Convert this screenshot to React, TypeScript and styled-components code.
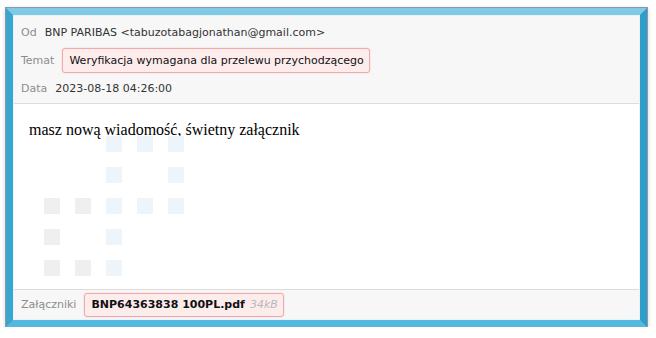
import styled, { createGlobalStyle } from "styled-components";

const GlobalStyle = createGlobalStyle`
  html, body {
    margin: 0;
    padding: 0;
    background: #ffffff;
  }
`;

const Janela = styled.div`
  box-sizing: border-box;
  margin: 8px 0 0 6px;
  width: 641px;
  height: 319px;
  border: 7px solid #52b6dc;
  border-top-color: #80cae6;
  border-left-color: #3aa6d0;
  border-right-color: #2f9dc8;
  border-bottom-color: #55b8de;
  box-shadow: 0 0 0 1px #8a9aa3, 0 1px 5px rgba(0, 0, 0, 0.25),
    inset 0 0 0 1px #e6f3f8;
  display: flex;
  flex-direction: column;
  background: #ffffff;
  font-family: "DejaVu Sans", Verdana, sans-serif;
  font-size: 11px;
`;

const Cabecalho = styled.div`
  background: #f7f7f7;
  border-bottom: 1px solid #dcdcdc;
  padding: 2px 7px 1px;
  margin: 1px 1px 0;
`;

const Linha = styled.div`
  display: flex;
  align-items: center;
  height: 28px;
`;

const Rotulo = styled.span`
  color: #8c8c8c;
  margin-right: 8px;
`;

const Valor = styled.span`
  color: #333333;
`;

const Destaque = styled.span<{ $negrito?: boolean }>`
  display: inline-flex;
  align-items: center;
  box-sizing: border-box;
  height: ${(p) => (p.$negrito ? "24px" : "25px")};
  padding: 0 5px 0 6px;
  background: #fdecec;
  border: 1px solid #f1aaaa;
  border-radius: 3px;
  box-shadow: 0 0 2px rgba(240, 120, 120, 0.35);
  color: #111111;
  font-weight: ${(p) => (p.$negrito ? 700 : 400)};
`;

const Tamanho = styled.span`
  color: #b8b8b8;
  font-style: italic;
  font-weight: 400;
  margin-left: 5px;
`;

const Corpo = styled.div`
  flex: 1;
  padding: 17px 16px 0;
  overflow: hidden;
`;

const Mensagem = styled.div`
  font-family: "Liberation Serif", "Times New Roman", serif;
  font-size: 16px;
  color: #000000;
  line-height: 18px;
`;

const Grade = styled.div`
  display: grid;
  grid-template-columns: repeat(5, 16px);
  grid-auto-rows: 16px;
  gap: 15px;
  margin: -3px 0 0 15px;
`;

const Quadrado = styled.span<{ $cor: "cinza" | "azul" | "vazio" }>`
  background: ${(p) =>
    p.$cor === "cinza" ? "#efefef" : p.$cor === "azul" ? "#edf5fb" : "transparent"};
`;

const Rodape = styled.div`
  background: #f7f7f7;
  border-top: 1px solid #dcdcdc;
  display: flex;
  align-items: center;
  height: 29px;
  padding: 0 7px;
  margin: 0 1px 1px;
`;

const padrao: ("cinza" | "azul" | "vazio")[][] = [
  ["vazio", "vazio", "azul", "azul", "azul"],
  ["vazio", "vazio", "azul", "vazio", "azul"],
  ["cinza", "cinza", "azul", "azul", "azul"],
  ["cinza", "vazio", "azul", "vazio", "vazio"],
  ["cinza", "cinza", "azul", "vazio", "vazio"],
];

function App() {
  return (
    <>
      <GlobalStyle />
      <Janela>
        <Cabecalho>
          <Linha>
            <Rotulo>Od</Rotulo>
            <Valor>BNP PARIBAS &lt;tabuzotabagjonathan@gmail.com&gt;</Valor>
          </Linha>
          <Linha>
            <Rotulo>Temat</Rotulo>
            <Destaque>Weryfikacja wymagana dla przelewu przychodzącego</Destaque>
          </Linha>
          <Linha>
            <Rotulo>Data</Rotulo>
            <Valor>2023-08-18 04:26:00</Valor>
          </Linha>
        </Cabecalho>
        <Corpo>
          <Mensagem>masz nową wiadomość, świetny załącznik</Mensagem>
          <Grade>
            {padrao.flat().map((cor, i) => (
              <Quadrado key={i} $cor={cor} />
            ))}
          </Grade>
        </Corpo>
        <Rodape>
          <Rotulo>Załączniki</Rotulo>
          <Destaque $negrito>
            BNP64363838 100PL.pdf
            <Tamanho>34kB</Tamanho>
          </Destaque>
        </Rodape>
      </Janela>
    </>
  );
}

export default App;
